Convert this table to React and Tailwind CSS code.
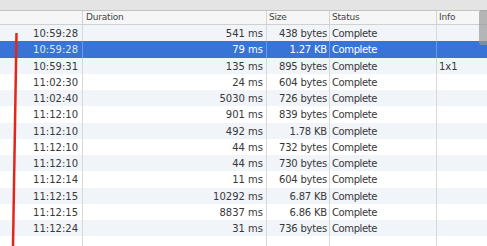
const rows = [
  ['10:59:28', '541 ms', '438 bytes', 'Complete', ''],
  ['10:59:28', '79 ms', '1.27 KB', 'Complete', ''],
  ['10:59:31', '135 ms', '895 bytes', 'Complete', '1x1'],
  ['11:02:30', '24 ms', '604 bytes', 'Complete', ''],
  ['11:02:40', '5030 ms', '726 bytes', 'Complete', ''],
  ['11:12:10', '901 ms', '839 bytes', 'Complete', ''],
  ['11:12:10', '492 ms', '1.78 KB', 'Complete', ''],
  ['11:12:10', '44 ms', '732 bytes', 'Complete', ''],
  ['11:12:10', '44 ms', '730 bytes', 'Complete', ''],
  ['11:12:14', '11 ms', '604 bytes', 'Complete', ''],
  ['11:12:15', '10292 ms', '6.87 KB', 'Complete', ''],
  ['11:12:15', '8837 ms', '6.86 KB', 'Complete', ''],
  ['11:12:24', '31 ms', '736 bytes', 'Complete', ''],
  ['', '', '', '', ''],
  ['', '', '', '', ''],
]

const cols = 'grid grid-cols-[82px_184px_63px_107px_51px]'

export default function App() {
  return (
    <div
      className="relative w-[487px] h-[246px] overflow-hidden bg-white text-[10px] text-[#383838]"
      style={{ fontFamily: '"DejaVu Sans", sans-serif' }}
    >
      <div className="h-[11px] bg-[#e4e4e4] border-b border-[#c4c4c4]" />
      <div className={`${cols} h-[14px] bg-[#f6f6f6] border-b border-[#d0d0d0] leading-[13px] text-[9px] tracking-[-0.2px] text-[#444]`}>
        <div />
        <div className="border-l border-[#d4d4d4] pl-[3px]">Duration</div>
        <div className="border-l border-[#d4d4d4] pl-[2px]">Size</div>
        <div className="border-l border-[#d4d4d4] pl-[2px]">Status</div>
        <div className="border-l border-[#d4d4d4] pl-[2px]">Info</div>
      </div>
      {rows.map((r, i) => {
        const sel = i === 1
        const bg = sel ? 'bg-[#3873d6] text-white' : i % 2 === 0 ? 'bg-[#f1f4f9]' : 'bg-white'
        const line = sel ? 'border-[#6d98e0]' : 'border-[#d8d8d8]'
        return (
          <div key={i} className={`${cols} h-[16.25px] leading-[17px] ${bg}`}>
            <div className={`text-right pr-[4px] ${sel ? 'text-[#dfe8f8]' : ''}`}>{r[0]}</div>
            <div className={`border-l ${line} text-right pr-[3px]`}>{r[1]}</div>
            <div className={`border-l ${line} text-right pr-[2px] whitespace-nowrap tracking-[-0.2px]`}>{r[2]}</div>
            <div className={`border-l ${line} pl-[2px] tracking-[-0.4px]`}>{r[3]}</div>
            <div className={`border-l ${line} pl-[2px]`}>{r[4]}</div>
          </div>
        )
      })}
      <div className="absolute right-0 top-[10px] w-[8px] h-[35px] rounded-l-[3px] bg-[#9a9a9a]/70" />
      <svg className="absolute left-0 top-0" width="487" height="246">
        <line x1="16.5" y1="33" x2="13" y2="246" stroke="#e3261c" strokeWidth="2.5" />
      </svg>
    </div>
  )
}
